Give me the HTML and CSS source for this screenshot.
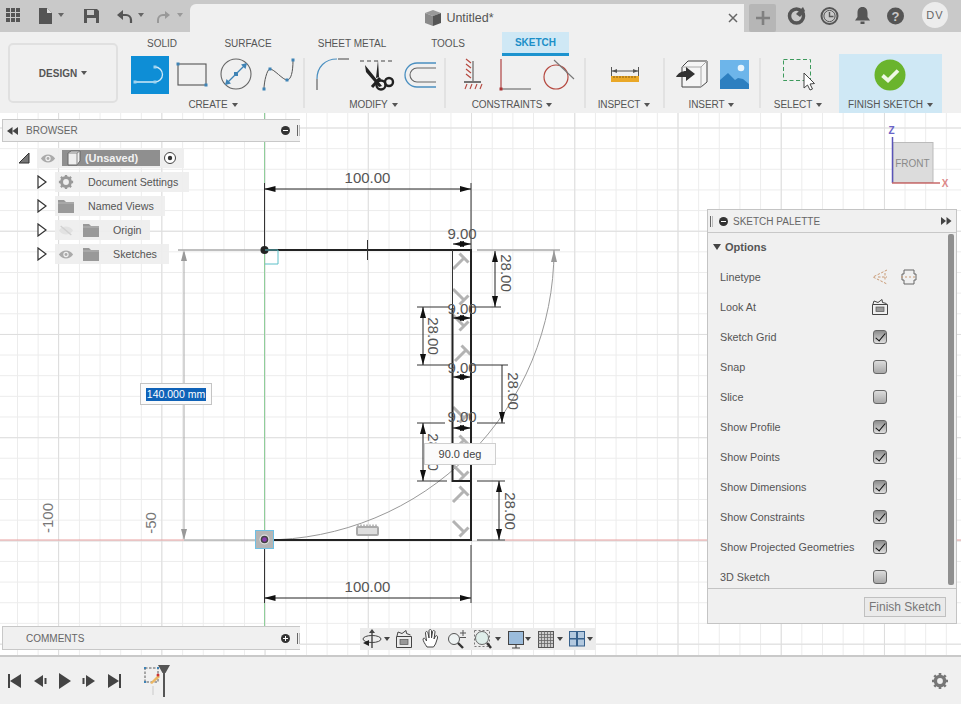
FILE: index.html
```html
<!DOCTYPE html>
<html lang="en">
<head>
<meta charset="utf-8">
<title>Untitled*</title>
<link rel="stylesheet" href="styles.css">
</head>
<body>
<div class="app">
  <header class="topbar">
    <nav class="qat">
      <svg class="q q-grid" viewBox="0 0 26 32"><g fill="#555"><rect x="6" y="8" width="4" height="4"/><rect x="11" y="8" width="4" height="4"/><rect x="16" y="8" width="4" height="4"/><rect x="6" y="13" width="4" height="4"/><rect x="11" y="13" width="4" height="4"/><rect x="16" y="13" width="4" height="4"/><rect x="6" y="18" width="4" height="4"/><rect x="11" y="18" width="4" height="4"/><rect x="16" y="18" width="4" height="4"/></g></svg>
      <svg class="q q-file" viewBox="0 0 42 32"><path d="M13 8h8l5 5v11H13z" fill="#555"/><path d="M21 8v5h5z" fill="#ddd"/><path d="M32 13h6l-3 4z" fill="#666"/></svg>
      <svg class="q q-save" viewBox="0 0 46 32"><path d="M16 9h13l2 2v12H16z" fill="#555"/><rect x="19" y="10" width="7" height="5" fill="#c9c9c9"/><rect x="19" y="18" width="9" height="5" fill="#c9c9c9"/></svg>
      <svg class="q q-undo" viewBox="0 0 38 32"><path d="M7 15h5a5 5 0 0 1 5 5v3" fill="none" stroke="#555" stroke-width="2.200"/><path d="M3 15l6-5v10z" fill="#555"/><path d="M24 13h6l-3 4z" fill="#666"/></svg>
      <svg class="q q-redo" viewBox="0 0 38 32"><path d="M6 23v-3a5 5 0 0 1 5-5h3" fill="none" stroke="#999" stroke-width="2"/><path d="M18 15l-5-4v8z" fill="#999"/><path d="M25 13h6l-3 4z" fill="#999"/></svg>
    </nav>
    <div class="doc-tab">
      <svg class="doc-cube" viewBox="0 0 18 18"><path d="M1 4l8-3 8 3-8 3z" fill="#999"/><path d="M1 4l8 3v10l-8-3z" fill="#8a8a8a"/><path d="M9 7l8-3v10l-8 3z" fill="#555"/></svg>
      <span class="doc-title">Untitled*</span>
      <svg class="doc-close" viewBox="0 0 10 10"><path d="M1 1l8 8M9 1l-8 8" stroke="#666" stroke-width="1.500"/></svg>
    </div>
    <div class="plus"><svg viewBox="0 0 14 14"><path d="M7 0v14M0 7h14" stroke="#808080" stroke-width="2.600"/></svg></div>
    <div class="top-icons">
      <svg viewBox="0 0 33 32"><circle cx="16.500" cy="16" r="7" fill="none" stroke="#555" stroke-width="3.500"/><path d="M16 14l7-7 2 4-5 6z" fill="#555"/></svg>
      <svg viewBox="0 0 33 32"><circle cx="16.500" cy="16" r="8" fill="#c9c9c9" stroke="#555" stroke-width="2"/><circle cx="16.500" cy="16" r="5.600" fill="none" stroke="#555"/><path d="M16.500 12v4.500h4" fill="none" stroke="#555" stroke-width="1.400"/></svg>
      <svg viewBox="0 0 33 32"><path d="M16.500 7c3.500 0 5 2.500 5 6v4l2.500 3.500H9l2.500-3.500v-4c0-3.500 1.500-6 5-6z" fill="#555"/><rect x="14.500" y="21.500" width="4" height="2.500" fill="#555"/></svg>
      <svg viewBox="0 0 33 32"><circle cx="16.500" cy="16" r="8.500" fill="#555"/><text class="help-q" x="16.500" y="20.500">?</text></svg>
    </div>
    <div class="avatar">DV</div>
  </header>

  <section class="toolbar">
    <button class="design">DESIGN<i class="caret"></i></button>
    <div class="ribbon">
      <nav class="tabs">
        <span class="tab t-solid">SOLID</span>
        <span class="tab t-surface">SURFACE</span>
        <span class="tab t-sheet">SHEET METAL</span>
        <span class="tab t-tools">TOOLS</span>
        <span class="tab t-sketch">SKETCH</span>
      </nav>
      <div class="groups">
        <div class="group g-create">
          <div class="tools">
            <svg class="tool active" viewBox="0 0 38 38"><path d="M4 26h20M24 11a7.500 7.500 0 0 1 0 15" fill="none" stroke="#cfe9f8" stroke-width="1.300"/><g fill="#9fd3f0"><rect x="2.500" y="24.500" width="3" height="3"/><rect x="22.500" y="24.500" width="3" height="3"/><rect x="22.500" y="9.500" width="3" height="3"/></g></svg>
            <svg class="tool" viewBox="0 0 38 38"><rect x="4" y="8" width="28" height="21" fill="none" stroke="#555" stroke-width="1.100"/><rect x="2.500" y="6.500" width="3" height="3" fill="#3f83b5"/><rect x="30.500" y="27.500" width="3" height="3" fill="#3f83b5"/></svg>
            <svg class="tool" viewBox="0 0 38 38"><circle cx="19" cy="18" r="15" fill="none" stroke="#666" stroke-width="1.100"/><path d="M9 28L29 8" stroke="#3f83b5" stroke-width="1.200"/><path d="M30 7l-6 1.500 4.500 4.500zM8 29l6-1.500-4.500-4.500z" fill="#3f83b5"/><rect x="17" y="16" width="4" height="4" fill="#3f83b5"/></svg>
            <svg class="tool" viewBox="0 0 38 38"><path d="M4 33C4 26 7 13 10 13c4 0 13 11 17 11 4 0 6-8 6-20" fill="none" stroke="#555" stroke-width="1"/><g fill="#3f83b5"><rect x="2.500" y="31.500" width="3" height="3"/><rect x="8.500" y="11.500" width="3" height="3"/><rect x="25.500" y="22.500" width="3" height="3"/><rect x="31.500" y="2.500" width="3" height="3"/></g></svg>
          </div>
          <div class="g-label">CREATE<i class="caret"></i></div>
        </div>
        <div class="group g-modify">
          <div class="tools">
            <svg class="tool" viewBox="0 0 38 38"><path d="M3 34V23" stroke="#555" stroke-width="1.100"/><path d="M3 23C3 11 11 3 23 3" fill="none" stroke="#4a8fc0" stroke-width="1.200"/><path d="M24 3h11" stroke="#555" stroke-width="1.100"/></svg>
            <svg class="tool" viewBox="0 0 38 38"><path d="M2 5h32" stroke="#444" stroke-width="1.100" stroke-dasharray="4 3"/><path d="M20 4l1 17-3 1zM7 9l17 21-3 1L8 16z" fill="#222"/><path d="M22 22L14 31" stroke="#222" stroke-width="3"/><circle cx="23" cy="29" r="4.500" fill="none" stroke="#222" stroke-width="2.400"/><circle cx="31" cy="26" r="4" fill="none" stroke="#222" stroke-width="2.400"/></svg>
            <svg class="tool" viewBox="0 0 38 38"><path d="M34 7H15a12 12 0 0 0 0 24h19" fill="none" stroke="#4a8fc0" stroke-width="1.300"/><path d="M34 12H15a7 7 0 0 0 0 14h19" fill="none" stroke="#666" stroke-width="1.100"/></svg>
          </div>
          <div class="g-label">MODIFY<i class="caret"></i></div>
        </div>
        <div class="group g-constraints">
          <div class="tools">
            <svg class="tool" viewBox="0 0 38 38"><path d="M19 5v20" stroke="#666" stroke-width="1.200"/><path d="M17 7l-5-4M17 12l-5-4M17 17l-5-4M17 22l-5-4" stroke="#b5483f" stroke-width="1.200"/><path d="M10 26h17" stroke="#666" stroke-width="1.800"/><path d="M13 28l-2 5M18 28l-2 5M23 28l-2 5M28 28l-2 5" stroke="#b5483f" stroke-width="1.100"/></svg>
            <svg class="tool" viewBox="0 0 38 38"><path d="M5 3v30" stroke="#a33" stroke-width="1.100"/><path d="M5 33h30" stroke="#666" stroke-width="1.100"/><rect x="3.500" y="31.500" width="3" height="3" fill="#a33"/></svg>
            <svg class="tool" viewBox="0 0 38 38"><circle cx="18" cy="21" r="12" fill="none" stroke="#b5483f" stroke-width="1.200"/><path d="M16 4l20 19" stroke="#777" stroke-width="1.100"/></svg>
          </div>
          <div class="g-label">CONSTRAINTS<i class="caret"></i></div>
        </div>
        <div class="group g-inspect">
          <div class="tools">
            <svg class="tool" viewBox="0 0 38 38"><path d="M5.500 11v9M32.500 11v9M6 15h26" stroke="#555" stroke-width="1"/><path d="M6 15l5-2v4zM32 15l-5-2v4z" fill="#555"/><rect x="5" y="20" width="28" height="6" fill="#eaa827"/><path d="M8 20v2M11 20v2M14 20v2M17 20v2M20 20v2M23 20v2M26 20v2M29 20v2" stroke="#8a5f10"/></svg>
          </div>
          <div class="g-label">INSPECT<i class="caret"></i></div>
        </div>
        <div class="group g-insert">
          <div class="tools">
            <svg class="tool" viewBox="0 0 38 38"><path d="M14 5h19v21l-6 5H8V11z" fill="#f5f5f5" stroke="#444" stroke-width="1"/><path d="M8 11h19l6-6M27 11v20" fill="none" stroke="#aaa" stroke-width="1"/><path d="M2 21c2-4 6-6 10-6v-4l9 7-9 7v-4c-4 0-7 0-10 0z" fill="#333"/></svg>
            <svg class="tool" viewBox="0 0 38 38"><rect x="5" y="4" width="29" height="29" fill="#6db5ea"/><circle cx="26" cy="12" r="3.300" fill="#e9f5fd"/><path d="M5 33V24l8-7 7 7 3-2 5 1 6 5v5z" fill="#2d7fc0"/></svg>
          </div>
          <div class="g-label">INSERT<i class="caret"></i></div>
        </div>
        <div class="group g-select">
          <div class="tools">
            <svg class="tool" viewBox="0 0 38 38"><rect x="2.500" y="3.500" width="27" height="21" fill="none" stroke="#3d9a5c" stroke-width="1" stroke-dasharray="4 2.500"/><path d="M23 17v15l3.500-3 2.500 5 2.500-1-2.500-5 4.500-.5z" fill="#fff" stroke="#444" stroke-width="1"/></svg>
          </div>
          <div class="g-label">SELECT<i class="caret"></i></div>
        </div>
        <div class="group g-finish">
          <div class="tools">
            <svg class="tool" viewBox="0 0 38 38"><circle cx="19" cy="19" r="15.500" fill="#6ab42d"/><path d="M11.500 19.500l5.500 5 10-10" fill="none" stroke="#eef7e4" stroke-width="3.800"/></svg>
          </div>
          <div class="g-label">FINISH SKETCH<i class="caret"></i></div>
        </div>
      </div>
    </div>
  </section>

  <main class="canvas">
    <svg class="sketch" viewBox="0 113 961 542">
      <defs>
        <marker id="ah" markerUnits="userSpaceOnUse" markerWidth="11" markerHeight="6" refX="11" refY="3" orient="auto-start-reverse"><path d="M0 0L11 3L0 6z" fill="#111"/></marker>
        <g id="glyph-a"><path d="M-4.500-4.500L4.500 4.500M0 0L-11 11" stroke="#b3b3b3" stroke-width="3" fill="none"/></g>
        <g id="glyph-b"><path d="M-4.500 4.500L4.500-4.500M0 0L-11-11" stroke="#b3b3b3" stroke-width="3" fill="none"/></g>
      </defs>
      <!-- axes -->
      <path class="axis-red" d="M0 540H184M505 540H961"/>
      <path class="axis-green" d="M264.500 113V630"/>
      <path class="constr" d="M178 250H264M477 250H560"/>
      <path class="constr thin" d="M184 540H258M264 540A290 290 0 0 0 554 250"/>
      <path d="M554 250l-3 12h6z" fill="#999"/>
      <line class="dimline gray" x1="184" y1="252" x2="184" y2="539"/>
      <path d="M184 250l-3 11h6zM184 540l-3-11h6z" fill="#999"/>
      <!-- constraint glyphs -->
      <use href="#glyph-a" x="464" y="258"/><use href="#glyph-b" x="464" y="300"/><use href="#glyph-b" x="464" y="326"/><use href="#glyph-a" x="466" y="350"/><use href="#glyph-b" x="464" y="418"/><use href="#glyph-a" x="464" y="440"/><use href="#glyph-b" x="464" y="476"/><use href="#glyph-a" x="464" y="491"/><use href="#glyph-b" x="464" y="532"/>
      <!-- profile -->
      <path class="prof" d="M264.500 250H471V540H264.500"/>
      <path class="prof" d="M452.500 308V481H471"/>
      <path class="dimext" d="M452.500 250V308"/>
      <!-- dimension extension -->
      <path class="dimext" d="M264.500 183V250M471 183V250M264.500 540V603M471 545V603M471 307H501M417 307H449M417 365H450M471 365H508M417 423H445M477 423H505M417 481H447M477 481H505M477 540H505M367.500 240V260"/>
      <line class="dimline" x1="264.500" y1="189" x2="471" y2="189" marker-start="url(#ah)" marker-end="url(#ah)"/>
      <line class="dimline" x1="264.500" y1="598" x2="471" y2="598" marker-start="url(#ah)" marker-end="url(#ah)"/>
      <line class="dimline" x1="495" y1="251" x2="495" y2="307" marker-start="url(#ah)" marker-end="url(#ah)"/>
      <line class="dimline" x1="423" y1="307" x2="423" y2="365" marker-start="url(#ah)" marker-end="url(#ah)"/>
      <line class="dimline" x1="502" y1="365" x2="502" y2="423" marker-end="url(#ah)"/>
      <line class="dimline" x1="423" y1="423" x2="423" y2="481" marker-start="url(#ah)" marker-end="url(#ah)"/>
      <line class="dimline" x1="499" y1="481" x2="499" y2="540" marker-start="url(#ah)" marker-end="url(#ah)"/>
      <line class="dimline" x1="453" y1="244" x2="471" y2="244" marker-start="url(#ah)" marker-end="url(#ah)"/>
      <line class="dimline" x1="453" y1="318" x2="471" y2="318" marker-start="url(#ah)" marker-end="url(#ah)"/>
      <line class="dimline" x1="453" y1="377" x2="471" y2="377" marker-start="url(#ah)" marker-end="url(#ah)"/>
      <line class="dimline" x1="453" y1="428" x2="471" y2="428" marker-start="url(#ah)" marker-end="url(#ah)"/>
      <!-- dimension values -->
      <text class="dim" x="367.500" y="183">100.00</text>
      <text class="dim" x="367.500" y="592">100.00</text>
      <text class="dim" x="462" y="239">9.00</text>
      <text class="dim" x="462" y="314">9.00</text>
      <text class="dim" x="462" y="373">9.00</text>
      <text class="dim" x="462" y="422">9.00</text>
      <text class="dim" transform="translate(501 273) rotate(90)">28.00</text>
      <text class="dim" transform="translate(428 336) rotate(90)">28.00</text>
      <text class="dim" transform="translate(508 391) rotate(90)">28.00</text>
      <text class="dim" transform="translate(428 452) rotate(90)">28.00</text>
      <text class="dim" transform="translate(505 511) rotate(90)">28.00</text>
      <text class="dim faint" transform="translate(156 523) rotate(-90)">-50</text>
      <text class="dim faint" transform="translate(53 518) rotate(-90)">-100</text>
      <!-- points & markers -->
      <circle cx="264.500" cy="250" r="4" fill="#222"/>
      <path d="M265 250h13v14h-13" fill="none" stroke="#5cc0c8" stroke-width="1"/>
      <g><rect x="255.500" y="530.500" width="18" height="18" fill="#b5b5b5" stroke="#6fc0e4"/><circle cx="264.500" cy="539.500" r="5" fill="#e0e0e0"/><circle cx="264.500" cy="539.500" r="3.800" fill="#444"/><circle cx="264.500" cy="539.500" r="2.300" fill="#8a3cb0"/></g>
      <g><rect x="357" y="527" width="21" height="8" rx="1" fill="#dedede" stroke="#aaa" stroke-width="2"/><path d="M358 527v-2.500M361 527v-2.500M364 527v-2.500M367 527v-2.500M370 527v-2.500M373 527v-2.500M376 527v-2.500" stroke="#aaa" stroke-width="1.500"/></g>
      <!-- view cube -->
      <rect x="893" y="142.500" width="40" height="40" fill="#dcdcdc" stroke="#bbb"/>
      <path d="M892.500 137V183" stroke="#5a54b8" stroke-width="1.500"/>
      <path d="M892 183H940" stroke="#c96a6a" stroke-width="1.500"/>
      <text class="cube-label" x="912.500" y="167">FRONT</text>
      <text class="axis-z" x="891.500" y="134">Z</text>
      <text class="axis-x" x="945" y="187">X</text>
    </svg>

    <aside class="panel browser">
      <svg class="chev" viewBox="0 0 12 10"><path d="M5.500 1v8L0 5zM11 1v8L5.500 5z" fill="#444"/></svg>
      <span class="panel-title">BROWSER</span>
      <span class="round-btn minus"></span>
      <span class="grip"></span>
    </aside>

    <div class="tree">
      <div class="node n-root">
        <svg class="tri-root" viewBox="0 0 12 12"><path d="M11 1L1 11h10z" fill="#777" stroke="#333"/></svg>
        <div class="node-body root-body">
          <svg class="eye" viewBox="0 0 18 12"><path d="M1 6c4-6 12-6 16 0-4 6-12 6-16 0z" fill="#aaa"/><circle cx="9" cy="6" r="3" fill="#f0f0f0"/><circle cx="9" cy="6" r="1.600" fill="#aaa"/></svg>
          <div class="root-name"><svg class="root-cube" viewBox="0 0 16 16"><path d="M3 3l3-2h9v10l-3 4H3z" fill="#eee" stroke="#666"/><path d="M3 3h9v12M12 3l3-2" fill="none" stroke="#888"/></svg><span>(Unsaved)</span></div>
          <svg class="radio" viewBox="0 0 14 14"><circle cx="7" cy="7" r="5.500" fill="#fff" stroke="#444"/><circle cx="7" cy="7" r="2.200" fill="#333"/></svg>
        </div>
      </div>
      <div class="node">
        <svg class="tri" viewBox="0 0 10 14"><path d="M1 1l8 6-8 6z" fill="#fff" stroke="#333" stroke-width="1.200"/></svg>
        <div class="node-body w-settings">
          <svg class="ico-gear" viewBox="0 0 18 18"><circle cx="9" cy="9" r="5" fill="none" stroke="#999" stroke-width="3.400"/><path d="M9 1v3M9 14v3M1 9h3M14 9h3M3.300 3.300l2 2M12.700 12.700l2 2M14.700 3.300l-2 2M5.300 12.700l-2 2" stroke="#999" stroke-width="2.600"/></svg>
          <span class="node-text">Document Settings</span>
        </div>
      </div>
      <div class="node">
        <svg class="tri" viewBox="0 0 10 14"><path d="M1 1l8 6-8 6z" fill="#fff" stroke="#333" stroke-width="1.200"/></svg>
        <div class="node-body w-views">
          <svg class="ico-folder" viewBox="0 0 16 13"><path d="M0 0h6l2 2h8v11H0z" fill="#999"/><path d="M0 3h16" stroke="#ccc" stroke-width=".6"/></svg>
          <span class="node-text">Named Views</span>
        </div>
      </div>
      <div class="node">
        <svg class="tri" viewBox="0 0 10 14"><path d="M1 1l8 6-8 6z" fill="#fff" stroke="#333" stroke-width="1.200"/></svg>
        <div class="node-body w-origin">
          <svg class="eye off" viewBox="0 0 18 12"><path d="M1 6c4-6 12-6 16 0-4 6-12 6-16 0z" fill="#e2e2e2"/><path d="M3 1l12 10" stroke="#d0d0d0" stroke-width="1.500"/></svg>
          <svg class="ico-folder f2" viewBox="0 0 16 13"><path d="M0 0h6l2 2h8v11H0z" fill="#999"/><path d="M0 3h16" stroke="#ccc" stroke-width=".6"/></svg>
          <span class="node-text">Origin</span>
        </div>
      </div>
      <div class="node">
        <svg class="tri" viewBox="0 0 10 14"><path d="M1 1l8 6-8 6z" fill="#fff" stroke="#333" stroke-width="1.200"/></svg>
        <div class="node-body w-sketches">
          <svg class="eye" viewBox="0 0 18 12"><path d="M1 6c4-6 12-6 16 0-4 6-12 6-16 0z" fill="#aaa"/><circle cx="9" cy="6" r="3" fill="#f0f0f0"/><circle cx="9" cy="6" r="1.600" fill="#aaa"/></svg>
          <svg class="ico-folder f2" viewBox="0 0 16 13"><path d="M0 0h6l2 2h8v11H0z" fill="#999"/><path d="M0 3h16" stroke="#ccc" stroke-width=".6"/></svg>
          <span class="node-text">Sketches</span>
        </div>
      </div>
    </div>

    <div class="dim-input"><span>140.000 mm</span></div>
    <div class="angle-tip">90.0 deg</div>

    <aside class="palette">
      <div class="pal-head">
        <span class="grip"></span>
        <span class="round-btn minus"></span>
        <span class="pal-title">SKETCH PALETTE</span>
        <svg class="pal-expand" viewBox="0 0 12 10"><path d="M1 1v8l5-4zM6.500 1v8l5-4z" fill="#444"/></svg>
      </div>
      <div class="pal-body">
        <div class="pal-scroll">
          <div class="opt-head"><i class="opt-tri"></i>Options</div>
          <div class="opt"><span class="opt-name">Linetype</span><span class="opt-ctl">
            <svg class="opt-ico" viewBox="0 0 18 18"><path d="M16 2L2 9l14 7M7 9h9M14 5v8" fill="none" stroke="#c99a74" stroke-width="1" stroke-dasharray="2.500 1.500"/></svg>
            <svg class="opt-ico second" viewBox="0 0 18 18"><path d="M4 2h10v4h2v6h-2v4H4v-4H2V6h2z" fill="none" stroke="#666" stroke-width="1"/><path d="M1 9h16" stroke="#c99a74" stroke-dasharray="2 2"/></svg>
          </span></div>
          <div class="opt"><span class="opt-name">Look At</span><span class="opt-ctl">
            <svg class="opt-ico" viewBox="0 0 18 18"><path d="M1.500 6.500h15v10h-15z" fill="none" stroke="#444"/><path d="M2 6l1-3 4 1.500 4-3 .5 3 4 1" fill="none" stroke="#444"/><rect x="5" y="9" width="8" height="4.500" fill="#999" stroke="#555" stroke-width=".7"/></svg>
          </span></div>
          <div class="opt"><span class="opt-name">Sketch Grid</span><span class="opt-ctl"><i class="cb on"></i></span></div>
          <div class="opt"><span class="opt-name">Snap</span><span class="opt-ctl"><i class="cb"></i></span></div>
          <div class="opt"><span class="opt-name">Slice</span><span class="opt-ctl"><i class="cb"></i></span></div>
          <div class="opt"><span class="opt-name">Show Profile</span><span class="opt-ctl"><i class="cb on"></i></span></div>
          <div class="opt"><span class="opt-name">Show Points</span><span class="opt-ctl"><i class="cb on"></i></span></div>
          <div class="opt"><span class="opt-name">Show Dimensions</span><span class="opt-ctl"><i class="cb on"></i></span></div>
          <div class="opt"><span class="opt-name">Show Constraints</span><span class="opt-ctl"><i class="cb on"></i></span></div>
          <div class="opt"><span class="opt-name">Show Projected Geometries</span><span class="opt-ctl"><i class="cb on"></i></span></div>
          <div class="opt"><span class="opt-name">3D Sketch</span><span class="opt-ctl"><i class="cb"></i></span></div>
        </div>
        <div class="scrollbar"></div>
      </div>
      <div class="pal-foot"><button class="finish-btn">Finish Sketch</button></div>
    </aside>

    <aside class="panel comments">
      <span class="panel-title">COMMENTS</span>
      <span class="round-btn plus-btn"></span>
      <span class="grip"></span>
    </aside>

    <div class="navbar">
      <svg class="nb w32" viewBox="0 0 32 22"><ellipse cx="12" cy="11" rx="9" ry="3.500" fill="none" stroke="#444"/><path d="M12 2v18" stroke="#444" stroke-width="1.400"/><path d="M12 1l-3 4h6z" fill="#444"/><path d="M3 15l6-3v6z" fill="#222"/><path d="M24 9h6l-3 4z" fill="#444"/></svg>
      <svg class="nb w25" viewBox="0 0 25 22"><path d="M4.500 8.500h15v11h-15z" fill="none" stroke="#444"/><path d="M5 8l1-4 4 1.500 4-3 .5 3 4 1.500" fill="none" stroke="#444"/><rect x="8" y="11.500" width="8" height="5" fill="#999" stroke="#555" stroke-width=".7"/></svg>
      <svg class="nb w26" viewBox="0 0 26 22"><path d="M10 19c-2-3-4-6-4-8 1-2 2.500 0 3.500 2L8.500 5c0-2 2-2 2.500 0l1 5V3c0-2 2.500-2 2.500 0v7l1-6c0-2 2.500-2 2.500 0l-1 7 1.500-3c1-1 2.500 0 2 2l-2 6-2 3z" fill="#fff" stroke="#444"/></svg>
      <svg class="nb w26" viewBox="0 0 26 22"><circle cx="11" cy="11" r="5.500" fill="#eef3f3" stroke="#555"/><path d="M15 15l5 5" stroke="#333" stroke-width="2.400"/><path d="M20 2v6M17 5h6M17 9.500h6" stroke="#555"/></svg>
      <svg class="nb w34" viewBox="0 0 34 22"><rect x="5.500" y="2.500" width="15" height="16" fill="none" stroke="#777" stroke-dasharray="2 2"/><circle cx="13" cy="10" r="6.500" fill="#dfeeea" stroke="#666"/><path d="M18 15l4 5" stroke="#333" stroke-width="2.400"/><path d="M26 9h6l-3 4z" fill="#444"/></svg>
      <svg class="nb w31" viewBox="0 0 31 22"><rect x="5.500" y="3.500" width="15" height="13" fill="#9bbcdc" stroke="#444"/><path d="M9 20h8M13 16.500V20" stroke="#444" stroke-width="1.200"/><path d="M22 9h6l-3 4z" fill="#444"/></svg>
      <svg class="nb w31" viewBox="0 0 31 22"><rect x="4.500" y="3.500" width="15" height="16" fill="#ccc" stroke="#555"/><path d="M7.500 3v16M10.500 3v16M13.500 3v16M16.500 3v16M4 6.500h15M4 9.500h15M4 12.500h15M4 15.500h15" stroke="#666" stroke-width=".8"/><path d="M23 9h6l-3 4z" fill="#444"/></svg>
      <svg class="nb w31" viewBox="0 0 31 22"><rect x="4.500" y="3.500" width="7" height="7" fill="#b3c9df" stroke="#37618c"/><rect x="12.500" y="3.500" width="7" height="7" fill="#b3c9df" stroke="#37618c"/><rect x="4.500" y="11" width="7" height="7" fill="#b3c9df" stroke="#37618c"/><rect x="12.500" y="11" width="7" height="7" fill="#b3c9df" stroke="#37618c"/><path d="M22 9h6l-3 4z" fill="#444"/></svg>
    </div>
  </main>

  <footer class="timeline">
    <svg class="tb" viewBox="0 0 25 20"><path d="M7 3v14" stroke="#444" stroke-width="2"/><path d="M19 3v14L8 10z" fill="#444"/></svg>
    <svg class="tb" viewBox="0 0 25 20"><path d="M16 4v12L7 10z" fill="#444"/><path d="M18.500 7v6" stroke="#444" stroke-width="2"/></svg>
    <svg class="tb" viewBox="0 0 25 20"><path d="M7 2v16l12-8z" fill="#444"/></svg>
    <svg class="tb" viewBox="0 0 25 20"><path d="M9 4v12l9-6z" fill="#444"/><path d="M6.500 7v6" stroke="#444" stroke-width="2"/></svg>
    <svg class="tb" viewBox="0 0 25 20"><path d="M6 3v14l11-7z" fill="#444"/><path d="M18 3v14" stroke="#444" stroke-width="2"/></svg>
    <div class="tl-item">
      <svg class="tl-sketch" viewBox="0 0 20 34"><rect x="2" y="4" width="13" height="14" fill="none" stroke="#5a5a5a" stroke-dasharray="2.500 1.500"/><path d="M7 19l8-8 2 2-8 7z" fill="#eab764"/><circle cx="15" cy="11" r="1.500" fill="#c33"/><g fill="#3f83b5"><rect x="1" y="3" width="2" height="2"/><rect x="14" y="3" width="2" height="2"/><rect x="1" y="17" width="2" height="2"/></g><rect x="9" y="22" width="2" height="9" fill="#ddd"/></svg>
      <svg class="tl-head" viewBox="0 0 12 34"><path d="M0 1h12L7.500 9H7v24H5V9h-.5z" fill="#555"/></svg>
    </div>
    <svg class="tl-gear" viewBox="0 0 18 18"><circle cx="9" cy="9" r="4.600" fill="none" stroke="#777" stroke-width="3.400"/><path d="M9 1v3M9 14v3M1 9h3M14 9h3M3.300 3.300l2 2M12.700 12.700l2 2M14.700 3.300l-2 2M5.300 12.700l-2 2" stroke="#777" stroke-width="2.600"/></svg>
  </footer>
</div>
</body>
</html>
```

FILE: styles.css
```css
* { box-sizing: border-box; }
html, body { margin: 0; padding: 0; }
body { width: 961px; height: 704px; overflow: hidden; background: #fff; font-family: "Liberation Sans", Arial, sans-serif; color: #555; }
.app { display: flex; flex-direction: column; width: 961px; height: 704px; }
svg { display: block; flex: none; }

/* top bar */
.topbar { display: flex; height: 32px; flex: none; background: #c9c9c9; }
.qat { display: flex; width: 190px; flex: none; }
.q { height: 32px; }
.q-grid { width: 26px; }
.q-file { width: 42px; }
.q-save { width: 46px; }
.q-undo, .q-redo { width: 38px; }
.doc-tab { position: relative; display: flex; align-items: center; justify-content: center; width: 554px; height: 28px; margin-top: 4px; background: #f0f0f0; border-top-left-radius: 6px; padding-right: 16px; gap: 4px; }
.doc-cube { width: 18px; height: 18px; }
.doc-title { font-size: 12.500px; color: #555; }
.doc-close { position: absolute; right: 6px; top: 9px; width: 10px; height: 10px; }
.plus { display: flex; align-items: center; justify-content: center; width: 27px; height: 28px; margin: 4px 0 0 5px; background: #b6b6b6; border-radius: 2px; }
.plus svg { width: 14px; height: 14px; }
.top-icons { display: flex; margin-left: 4px; }
.top-icons svg { width: 33px; height: 32px; }
.help-q { font: bold 13px "Liberation Sans", sans-serif; fill: #c9c9c9; text-anchor: middle; }
.avatar { display: flex; align-items: center; justify-content: center; width: 26px; height: 26px; margin: 2px 0 0 10px; border-radius: 50%; background: #ececec; font-size: 11px; letter-spacing: 1px; color: #666; }

/* toolbar */
.toolbar { display: flex; height: 81px; flex: none; background: #f0f0f0; }
.design { width: 110px; height: 60px; margin: 11px 0 0 8px; background: #f0f0f0; border: 2px solid #e0e0e0; border-radius: 5px; font: bold 10px "Liberation Sans", sans-serif; color: #555; padding: 0; }
.caret { display: inline-block; width: 0; height: 0; margin-left: 4px; vertical-align: 2px; border-left: 3px solid transparent; border-right: 3px solid transparent; border-top: 4px solid #555; }
.ribbon { display: flex; flex-direction: column; margin-left: 8px; }
.tabs { display: flex; height: 24px; padding-left: 4px; flex: none; }
.tab { display: flex; align-items: center; justify-content: center; height: 24px; padding-bottom: 2px; font-size: 10px; color: #555; }
.t-solid { width: 64px; }
.t-surface { width: 108px; }
.t-sheet { width: 100px; }
.t-tools { width: 92px; margin-right: 8px; }
.t-sketch { width: 67px; background: #cfe8f5; border-bottom: 3px solid #1c93cf; color: #1c8fc8; font-weight: bold; padding-bottom: 0; }
.groups { display: flex; height: 57px; }
.group { position: relative; display: flex; flex-direction: column; height: 57px; }
.group::after { content: ""; position: absolute; right: 0; top: 2px; height: 50px; width: 2px; background: #e2e2e2; }
.tools { display: flex; height: 38px; flex: none; }
.tool { width: 38px; height: 38px; overflow: visible; }
.tool.active { background: #0e8ed6; }
.g-label { height: 19px; padding-top: 2px; display: flex; align-items: center; justify-content: center; font-size: 10px; letter-spacing: -.1px; color: #555; white-space: nowrap; }
.g-create { width: 179px; }
.g-create .tools { padding-left: 5px; gap: 5px; }
.g-create .g-label { padding-right: 5px; }
.g-modify { width: 141px; }
.g-modify .tools { padding-left: 9px; gap: 6px; }
.g-modify .g-label { padding-right: 4px; }
.g-constraints { width: 140px; }
.g-constraints .tools { padding-left: 8px; gap: 4px; }
.g-constraints .g-label { padding-right: 8px; }
.g-inspect { width: 79px; }
.g-inspect .tools { padding-left: 20px; }
.g-inspect .g-label { padding-right: 3px; }
.g-insert { width: 96px; }
.g-insert .tools { padding-left: 9px; gap: 3px; }
.g-insert .g-label { padding-right: 3px; }
.g-select { width: 78px; }
.g-select .tools { padding-left: 20px; }
.g-select .g-label { padding-right: 4px; }
.g-select::after { display: none; }
.g-finish { width: 103px; height: 59px; margin-top: -2px; background: #cfe8f5; }
.g-finish .tools { padding-left: 32px; margin-top: 2px; }
.g-finish::after { display: none; }

/* canvas */
.canvas { position: relative; height: 542px; flex: none; overflow: hidden; background-color: #fff;
  background-image:
    linear-gradient(to right, #dedede 1px, transparent 1px),
    linear-gradient(to bottom, #dedede 1px, transparent 1px),
    linear-gradient(to right, #ececec 1px, transparent 1px),
    linear-gradient(to bottom, #ececec 1px, transparent 1px);
  background-size: 103.250px 100%, 100% 103.250px, 20.650px 100%, 100% 20.650px;
  background-position: 58px 0, 0 14.500px, 17px 0, 0 14.500px; }
.sketch { position: absolute; left: 0; top: 0; width: 961px; height: 542px; }
.axis-red { stroke: #e9a0a0; stroke-width: 1; }
.axis-green { stroke: #8fce9a; stroke-width: 1; }
.constr { stroke: #aaa; stroke-width: 1.300; fill: none; }
.constr.thin { stroke: #999; stroke-width: 1; }
.prof { stroke: #222; stroke-width: 2; fill: none; }
.dimext { stroke: #333; stroke-width: 1; fill: none; }
.dimline { stroke: #222; stroke-width: 1; }
.dimline.gray { stroke: #aaa; }
.dim { font: 15px "Liberation Sans", sans-serif; fill: #555; text-anchor: middle; }
.dim.faint { fill: #777; }
.cube-label { font: 10px "Liberation Sans", sans-serif; fill: #8a8a8a; text-anchor: middle; }
.axis-z { font: bold 10px "Liberation Sans", sans-serif; fill: #6a64c8; text-anchor: middle; }
.axis-x { font: bold 10px "Liberation Sans", sans-serif; fill: #d88; text-anchor: middle; }

/* panels */
.panel { position: absolute; display: flex; align-items: center; left: 2px; width: 298px; background: #f0f0f0; border: 1px solid #c8c8c8; border-right: 0; }
.browser { top: 6px; height: 23px; padding-left: 4px; }
.comments { top: 513px; height: 24px; padding-left: 23px; }
.chev { width: 12px; height: 10px; margin-right: 7px; }
.panel-title { font-size: 10px; color: #666; flex: 1; }
.round-btn { position: relative; display: block; width: 9px; height: 9px; border-radius: 50%; background: #333; flex: none; }
.round-btn.minus::after { content: ""; position: absolute; left: 2px; right: 2px; top: 4px; height: 1px; background: #fff; }
.plus-btn::before, .plus-btn::after { content: ""; position: absolute; background: #fff; }
.plus-btn::before { left: 2px; right: 2px; top: 4px; height: 1px; }
.plus-btn::after { top: 2px; bottom: 2px; left: 4px; width: 1px; }
.grip { display: block; width: 3px; height: 11px; margin-left: 7px; border-left: 1px solid #666; border-right: 1px solid #bbb; flex: none; }

/* tree */
.tree { position: absolute; left: 18px; top: 35px; display: flex; flex-direction: column; gap: 4px; }
.node { display: flex; align-items: center; height: 20px; margin-left: 19px; }
.n-root { margin-left: 0; }
.tri-root { width: 12px; height: 12px; margin-right: 7px; }
.tri { width: 10px; height: 14px; margin-right: 8px; }
.node-body { display: flex; align-items: center; height: 20px; background: rgba(238,238,238,.92); }
.root-body { width: 147px; padding-left: 3px; }
.eye { width: 16px; height: 11px; }
.root-name { display: flex; align-items: center; width: 98px; height: 16px; margin-left: 6px; background: #8f8f8f; }
.root-cube { width: 16px; height: 16px; margin-left: 3px; }
.root-name span { flex: 1; text-align: center; font-size: 11px; font-weight: bold; color: #f2f2f2; padding-right: 18px; }
.radio { width: 14px; height: 14px; margin-left: 3px; }
.w-settings { width: 134px; padding-left: 3px; }
.w-views { width: 110px; padding-left: 3px; }
.w-origin { width: 95px; padding-left: 3px; }
.w-sketches { width: 114px; padding-left: 3px; }
.ico-gear { width: 16px; height: 16px; }
.ico-folder { width: 16px; height: 13px; }
.ico-folder.f2 { margin-left: 9px; }
.node-text { font-size: 10.700px; color: #555; margin-left: 14px; white-space: nowrap; }

/* overlays */
.dim-input { position: absolute; left: 140px; top: 270px; width: 72px; height: 22px; display: flex; align-items: center; justify-content: center; background: #fbfbfb; border: 1px solid #c4c4c4; }
.dim-input span { background: #0f62b8; color: #fff; font-size: 10.500px; line-height: 13px; padding: 0 1px; }
.angle-tip { position: absolute; left: 424px; top: 330px; width: 72px; height: 22px; display: flex; align-items: center; justify-content: center; background: #fbfbfb; border: 1px solid #cfcfcf; font-size: 11px; color: #444; }

/* sketch palette */
.palette { position: absolute; left: 707px; top: 96px; width: 250px; height: 415px; display: flex; flex-direction: column; background: #f0f0f0; border: 1px solid #c4c4c4; }
.pal-head { display: flex; align-items: center; height: 23px; flex: none; border-bottom: 1px solid #c8c8c8; }
.pal-head .grip { margin-left: 2px; margin-right: 6px; }
.pal-title { flex: 1; font-size: 10px; color: #666; margin-left: 5px; }
.pal-expand { width: 12px; height: 10px; margin-right: 4px; }
.pal-body { position: relative; display: flex; height: 355px; flex: none; overflow: hidden; }
.pal-scroll { flex: 1; }
.opt-head { display: flex; align-items: center; height: 29px; padding: 0 0 2px 5px; font-size: 11px; font-weight: bold; color: #555; }
.opt-tri { width: 0; height: 0; margin-right: 4px; border-left: 4px solid transparent; border-right: 4px solid transparent; border-top: 6px solid #444; }
.opt { display: flex; align-items: center; height: 30px; padding-left: 12px; }
.opt-name { width: 152px; font-size: 10.800px; color: #555; white-space: nowrap; }
.opt-ctl { display: flex; align-items: center; width: 70px; }
.opt-ico { width: 18px; height: 18px; margin-left: -1px; }
.opt-ico.second { margin-left: 11px; }
.cb { position: relative; display: block; width: 14px; height: 14px; margin-left: 1px; border: 1px solid #666; border-radius: 3px; background: linear-gradient(#dcdcdc, #a8a8a8); }
.cb.on { background: linear-gradient(#8c8c8c, #dedede); }
.cb.on::after { content: ""; position: absolute; left: 4px; top: 0; width: 4px; height: 9px; border-right: 1.500px solid #111; border-bottom: 1.500px solid #111; transform: rotate(40deg); }
.scrollbar { width: 6px; height: 351px; margin: 1px 2px 0 0; background: #8f8f8f; border-radius: 2px; flex: none; }
.pal-foot { display: flex; justify-content: flex-end; align-items: center; height: 35px; flex: none; border-top: 1px solid #c4c4c4; padding: 2px 10px 0 0; }
.finish-btn { width: 82px; height: 20px; padding: 0; background: #eaeaea; border: 1px solid #c0c0c0; font: 12px "Liberation Sans", sans-serif; color: #777; }

/* nav bar */
.navbar { position: absolute; left: 360px; top: 515px; display: flex; height: 22px; width: 236px; background: #ececec; }
.nb { height: 22px; }
.w25 { width: 25px; } .w26 { width: 26px; } .w31 { width: 31px; } .w32 { width: 32px; } .w34 { width: 34px; }

/* timeline */
.timeline { display: flex; align-items: center; height: 49px; flex: 1; background: #f0f0f0; border-top: 2px solid #c9c9c9; padding-left: 2px; }
.tb { width: 25px; height: 20px; }
.tl-item { display: flex; margin-left: 16px; }
.tl-sketch { width: 20px; height: 34px; }
.tl-head { width: 12px; height: 34px; margin-left: -5px; }
.tl-gear { width: 18px; height: 18px; margin-left: auto; margin-right: 12px; }
```
